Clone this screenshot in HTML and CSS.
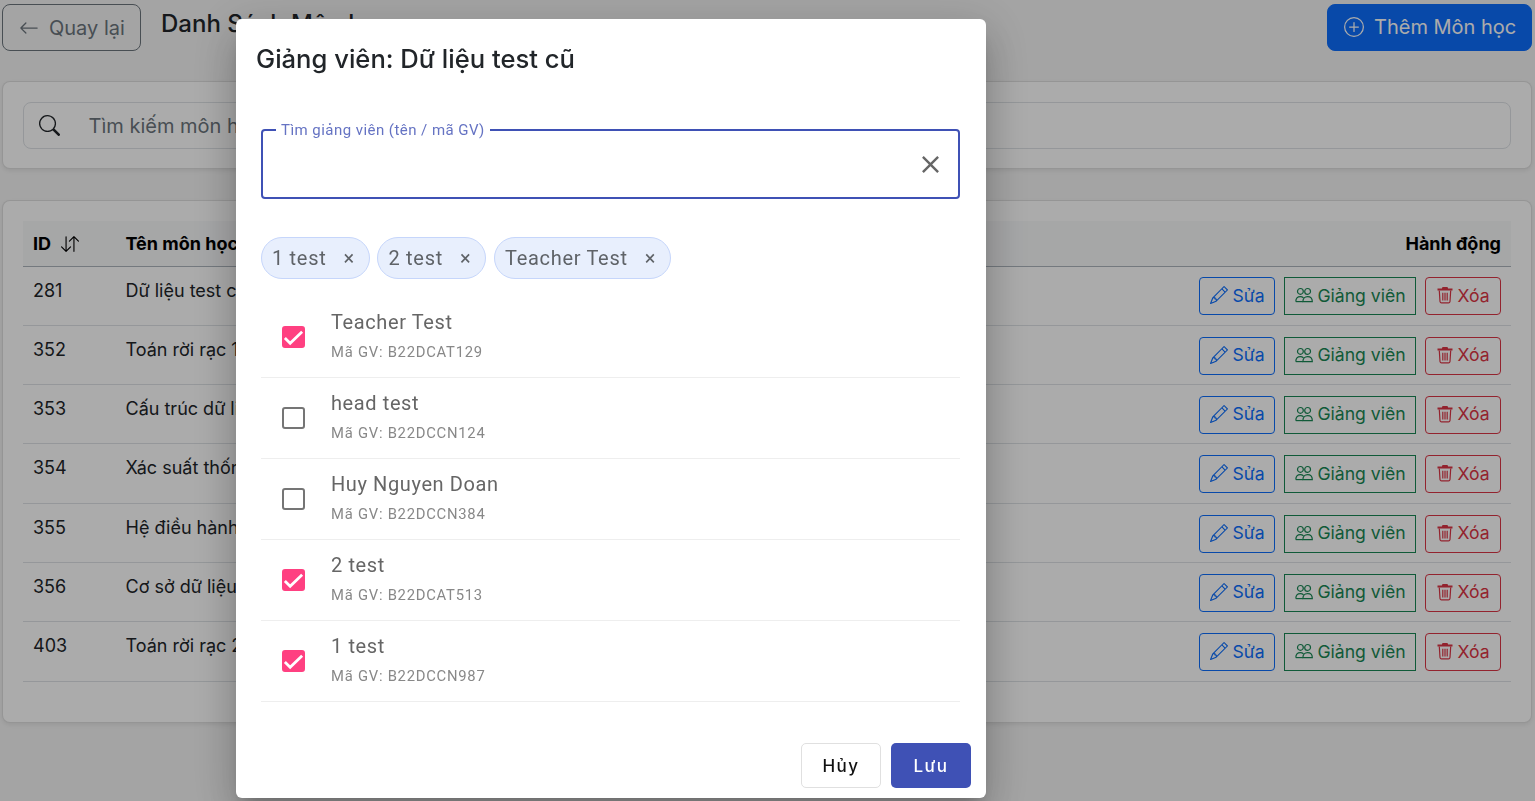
FILE: index.html
```html
<!DOCTYPE html>
<html lang="en">
<head>
    <meta charset="UTF-8">
    <meta name="viewport" content="width=device-width, initial-scale=1.0">
    <title>Danh Sách Môn học</title>
    <link rel="stylesheet" href="styles.css">
</head>
<body>
    <svg class="icon-defs" width="0" height="0">
        <symbol id="i-pencil" viewBox="0 0 16 16"><path fill="currentColor" d="M12.146.146a.5.5 0 0 1 .708 0l3 3a.5.5 0 0 1 0 .708l-10 10a.5.5 0 0 1-.168.11l-5 2a.5.5 0 0 1-.65-.65l2-5a.5.5 0 0 1 .11-.168zM11.207 2.5 13.5 4.793 14.793 3.5 12.5 1.207zm1.586 3L10.5 3.207 4 9.707V10h.5a.5.5 0 0 1 .5.5v.5h.5a.5.5 0 0 1 .5.5v.5h.293zm-9.761 5.175-.106.106-1.528 3.821 3.821-1.528.106-.106A.5.5 0 0 1 5 12.5V12h-.5a.5.5 0 0 1-.5-.5V11h-.5a.5.5 0 0 1-.468-.325"/></symbol>
        <symbol id="i-people" viewBox="0 0 18 16"><g fill="none" stroke="currentColor" stroke-width="1.2"><circle cx="5.4" cy="4.4" r="2.9"/><circle cx="12.6" cy="4.4" r="2.9"/><path d="M.8 14.6c0-3 1.9-5 4.6-5 1.2 0 2.2.4 3 1.100M17.300 14.600c0-3-2-5-4.700-5-2.800 0-4.700 2-4.700 5z"/><path d="M.8 14.600h7.100"/></g></symbol>
        <symbol id="i-trash" viewBox="0 0 16 17"><path fill="currentColor" d="M5.500.5h5l.6 1.500H15.500v2H.5v-2h4.400z"/><path fill="none" stroke="currentColor" stroke-width="1.200" d="M2.300 4l.7 11c.1.900.7 1.400 1.500 1.400h7c.8 0 1.400-.5 1.500-1.400l.7-11M5.800 6.300v7.800M8 6.300v7.800M10.200 6.300v7.800"/></symbol>
        <symbol id="i-tick" viewBox="0 0 24 24"><path fill="none" stroke="#fff" stroke-width="2.900" d="M3 12.500l5.500 5.500L21 6"/></symbol>
    </svg>

    <div class="page">
        <div class="top-bar">
            <div class="top-left">
                <button class="btn-back">
                    <svg width="20" height="20" viewBox="0 0 16 16"><path fill="currentColor" fill-rule="evenodd" d="M15 8a.5.5 0 0 0-.5-.5H2.707l3.147-3.146a.5.5 0 1 0-.708-.708l-4 4a.5.5 0 0 0 0 .708l4 4a.5.5 0 0 0 .708-.708L2.707 8.5H14.500A.5.5 0 0 0 15 8"/></svg>
                    Quay lại
                </button>
                <h1>Danh Sách Môn học</h1>
            </div>
            <button class="btn-add">
                <svg width="20" height="20" viewBox="0 0 16 16" fill="currentColor"><path d="M8 15A7 7 0 1 1 8 1a7 7 0 0 1 0 14m0 1A8 8 0 1 0 8 0a8 8 0 0 0 0 16"/><path d="M8 4a.5.5 0 0 1 .5.5v3h3a.5.5 0 0 1 0 1h-3v3a.5.5 0 0 1-1 0v-3h-3a.5.5 0 0 1 0-1h3v-3A.5.5 0 0 1 8 4"/></svg>
                Thêm Môn học
            </button>
        </div>

        <div class="card search-card">
            <div class="search-box">
                <svg width="21" height="21" viewBox="0 0 16 16" fill="currentColor"><path d="M11.742 10.344a6.500 6.500 0 1 0-1.397 1.398h-.001c.03.04.062.078.098.115l3.850 3.850a1 1 0 0 0 1.415-1.414l-3.850-3.850a1.007 1.007 0 0 0-.115-.1zM12 6.500a5.500 5.500 0 1 1-11 0 5.500 5.500 0 0 1 11 0"/></svg>
                <span class="placeholder">Tìm kiếm môn học...</span>
            </div>
        </div>

        <div class="card table-card">
            <table>
                <thead>
                    <tr>
                        <th class="col-id">ID <svg class="sort" width="18" height="18" viewBox="0 0 16 16" fill="currentColor"><path d="M11.500 15a.5.5 0 0 0 .5-.5V2.707l3.146 3.147a.5.5 0 0 0 .708-.708l-4-4a.5.5 0 0 0-.708 0l-4 4a.5.5 0 1 0 .708.708L11 2.707V14.500a.5.5 0 0 0 .5.5m-7-14a.5.5 0 0 1 .5.5v11.793l3.146-3.147a.5.5 0 0 1 .708.708l-4 4a.5.5 0 0 1-.708 0l-4-4a.5.5 0 0 1 .708-.708L4 13.293V1.500a.5.5 0 0 1 .5-.5"/></svg></th>
                        <th>Tên môn học</th>
                        <th class="col-actions">Hành động</th>
                    </tr>
                </thead>
                <tbody id="rows"></tbody>
            </table>
        </div>
    </div>

    <div class="overlay">
        <div class="modal">
            <h2>Giảng viên: Dữ liệu test cũ</h2>

            <fieldset class="field">
                <legend>Tìm giảng viên (tên / mã GV)</legend>
                <svg class="field-clear" width="29" height="29" viewBox="0 0 24 24"><path fill="currentColor" d="M19 6.410 17.590 5 12 10.590 6.410 5 5 6.410 10.590 12 5 17.590 6.410 19 12 13.410 17.590 19 19 17.590 13.410 12z"/></svg>
            </fieldset>

            <div class="chips">
                <span class="chip">1 test <b>×</b></span>
                <span class="chip">2 test <b>×</b></span>
                <span class="chip">Teacher Test <b>×</b></span>
            </div>

            <ul class="teachers">
                <li><span class="check on"><svg width="23" height="23"><use href="#i-tick"/></svg></span><div class="t-text"><div class="t-name">Teacher Test</div><div class="t-code">Mã GV: B22DCAT129</div></div></li>
                <li><span class="check"></span><div class="t-text"><div class="t-name">head test</div><div class="t-code">Mã GV: B22DCCN124</div></div></li>
                <li><span class="check"></span><div class="t-text"><div class="t-name">Huy Nguyen Doan</div><div class="t-code">Mã GV: B22DCCN384</div></div></li>
                <li><span class="check on"><svg width="23" height="23"><use href="#i-tick"/></svg></span><div class="t-text"><div class="t-name">2 test</div><div class="t-code">Mã GV: B22DCAT513</div></div></li>
                <li><span class="check on"><svg width="23" height="23"><use href="#i-tick"/></svg></span><div class="t-text"><div class="t-name">1 test</div><div class="t-code">Mã GV: B22DCCN987</div></div></li>
            </ul>

            <div class="modal-actions">
                <button class="btn-cancel">Hủy</button>
                <button class="btn-save">Lưu</button>
            </div>
        </div>
    </div>

    <script>
        const subjects = [
            [281, 'Dữ liệu test cũ'],
            [352, 'Toán rời rạc 1'],
            [353, 'Cấu trúc dữ liệu'],
            [354, 'Xác suất thống kê'],
            [355, 'Hệ điều hành'],
            [356, 'Cơ sở dữ liệu'],
            [403, 'Toán rời rạc 2']
        ];

        const icon = (name, w, h) => `<svg width="${w}" height="${h}"><use href="#i-${name}"/></svg>`;

        document.getElementById('rows').innerHTML = subjects.map(s => `
            <tr>
                <td>${s[0]}</td>
                <td>${s[1]}</td>
                <td class="actions">
                    <div class="action-group">
                        <button class="act act-edit">${icon('pencil', 18, 18)} Sửa</button>
                        <button class="act act-teacher">${icon('people', 18, 16)} Giảng viên</button>
                        <button class="act act-delete">${icon('trash', 16, 18)} Xóa</button>
                    </div>
                </td>
            </tr>
        `).join('');
    </script>
</body>
</html>
```

FILE: styles.css
```css
* {
    box-sizing: border-box;
}
html, body {
    height: 100%;
}
body {
    margin: 0;
    overflow: hidden;
    font-family: Inter, "Liberation Sans", sans-serif;
    font-size: 18px;
    color: #212529;
    background-color: #f5f5f5;
}
button {
    font-family: inherit;
    white-space: nowrap;
    cursor: pointer;
}
button svg, .search-box svg {
    flex: none;
}
.icon-defs {
    position: absolute;
}
.page {
    padding: 4px 3px 0 2px;
}
.top-bar {
    display: flex;
    justify-content: space-between;
    align-items: flex-start;
    height: 47px;
    margin-bottom: 30px;
}
.top-left {
    display: flex;
    gap: 20px;
}
h1 {
    margin: 0;
    font-size: 24px;
    font-weight: 500;
    line-height: 40px;
}
.btn-back, .btn-add {
    display: flex;
    align-items: center;
    height: 47px;
    font-size: 20px;
    border-radius: 8px;
}
.btn-back {
    width: 139px;
    gap: 10px;
    padding: 0 0 0 16px;
    color: #6c757d;
    background: transparent;
    border: 1px solid #6c757d;
}
.btn-add {
    width: 205px;
    gap: 10px;
    padding: 0 0 2px 16px;
    color: #fff;
    background-color: #0d6efd;
    border: 1px solid #0d6efd;
}
.card {
    background-color: #fff;
    border: 1px solid rgba(0, 0, 0, 0.125);
    border-radius: 8px;
    box-shadow: 0 2px 4px rgba(0, 0, 0, 0.075);
    padding: 20px;
}
.search-card {
    height: 88px;
    margin-bottom: 31px;
}
.search-box {
    display: flex;
    align-items: center;
    gap: 28.5px;
    height: 47px;
    padding-left: 15px;
    border: 1px solid #dee2e6;
    border-radius: 8px;
}
.placeholder {
    font-size: 20px;
    color: #6c757d;
}
.table-card {
    height: 523px;
}
table {
    width: 100%;
    border-collapse: collapse;
    table-layout: fixed;
}
th {
    height: 45px;
    padding: 0 10px;
    text-align: left;
    font-size: 18px;
    font-weight: 700;
    color: #000;
    background-color: #f8f9fa;
    border-bottom: 1px solid #adb5bd;
}
.col-id {
    width: 92.5px;
}
.sort {
    vertical-align: -3px;
    margin-left: 6px;
}
.col-actions {
    text-align: right;
}
td {
    height: 59.33px;
    padding: 12px 10px 0;
    line-height: 24px;
    vertical-align: top;
    border-bottom: 1px solid #dee2e6;
}
td.actions {
    padding: 10.8px 10px 0;
}
.action-group {
    display: flex;
    justify-content: flex-end;
    gap: 9px;
}
.act {
    display: flex;
    align-items: center;
    justify-content: center;
    gap: 4px;
    height: 38px;
    padding: 0 0 2px 1px;
    font-size: 17.6px;
    background: transparent;
    border-radius: 4px;
}
.act-edit {
    width: 76px;
    color: #0d6efd;
    border: 1px solid #0d6efd;
}
.act-teacher {
    width: 132px;
    color: #198754;
    border: 1px solid #198754;
    border-radius: 0;
}
.act-delete {
    width: 76px;
    color: #dc3545;
    border: 1px solid #dc3545;
}

/* modal */
.overlay {
    position: fixed;
    inset: 0;
    padding: 19px 0 0 236px;
    background-color: rgba(0, 0, 0, 0.33);
}
.modal {
    display: flex;
    flex-direction: column;
    width: 750px;
    height: 779px;
    padding: 0 25px 0 25px;
    background-color: #fff;
    border-radius: 6px;
    box-shadow: 0 11px 15px -7px rgba(0, 0, 0, 0.2), 0 24px 38px 3px rgba(0, 0, 0, 0.14), 0 9px 46px 8px rgba(0, 0, 0, 0.12);
}
.modal h2 {
    margin: 0 0 0 -5px;
    padding-top: 24px;
    height: 103px;
    font-size: 25.6px;
    font-weight: 500;
    line-height: 32px;
    color: #212529;
}
.field {
    position: relative;
    width: 699px;
    height: 77px;
    margin: 0;
    padding: 0 13px;
    border: 2px solid #3f51b5;
    border-radius: 4px;
}
.field legend {
    padding: 0 5px;
    font-family: Roboto, sans-serif;
    font-size: 15px;
    line-height: 16px;
    letter-spacing: 0.45px;
    color: #6573c3;
}
.field-clear {
    position: absolute;
    right: 13px;
    top: 12px;
    color: #666;
}
.chips {
    display: flex;
    gap: 7.7px;
    margin-top: 38px;
}
.chip {
    display: flex;
    align-items: center;
    justify-content: space-between;
    height: 42px;
    padding: 0 14px 0 10px;
    font-family: Roboto, sans-serif;
    font-size: 20px;
    letter-spacing: 0.7px;
    color: #5f6368;
    background-color: #e8effd;
    border: 1px solid #c6d6fb;
    border-radius: 21px;
}
.chip b {
    margin-left: 17px;
    font-weight: 400;
    font-size: 20px;
}
.teachers {
    margin: 18px 0 0;
    padding: 0;
    width: 699px;
    list-style: none;
}
.teachers li {
    display: flex;
    align-items: center;
    gap: 26px;
    height: 81px;
    padding-left: 21px;
    border-bottom: 1px solid #eee;
    font-family: Roboto, sans-serif;
}
.t-text {
    padding-bottom: 5px;
}
.t-name {
    font-size: 20px;
    line-height: 28px;
    letter-spacing: 0.6px;
    color: #666;
}
.t-code {
    margin-top: 6px;
    font-size: 14.8px;
    line-height: 20px;
    letter-spacing: 0.75px;
    color: #888;
}
.check {
    display: flex;
    align-items: center;
    justify-content: center;
    flex: none;
    width: 23px;
    height: 22px;
    border: 2px solid #757575;
    border-radius: 3px;
}
.check.on {
    background-color: #ff4081;
    border-color: #ff4081;
}
.check svg {
    flex: none;
}
.modal-actions {
    display: flex;
    justify-content: flex-end;
    gap: 10px;
    margin: 41px -10px 0 0;
}
.modal-actions button {
    width: 80px;
    height: 45px;
    font-size: 17px;
    font-weight: 500;
    letter-spacing: 1.4px;
    border-radius: 5px;
}
.btn-cancel {
    color: #111;
    background-color: #fff;
    border: 1px solid #e0e0e0;
}
.btn-save {
    color: #fff;
    background-color: #3f51b5;
    border: none;
}
```
